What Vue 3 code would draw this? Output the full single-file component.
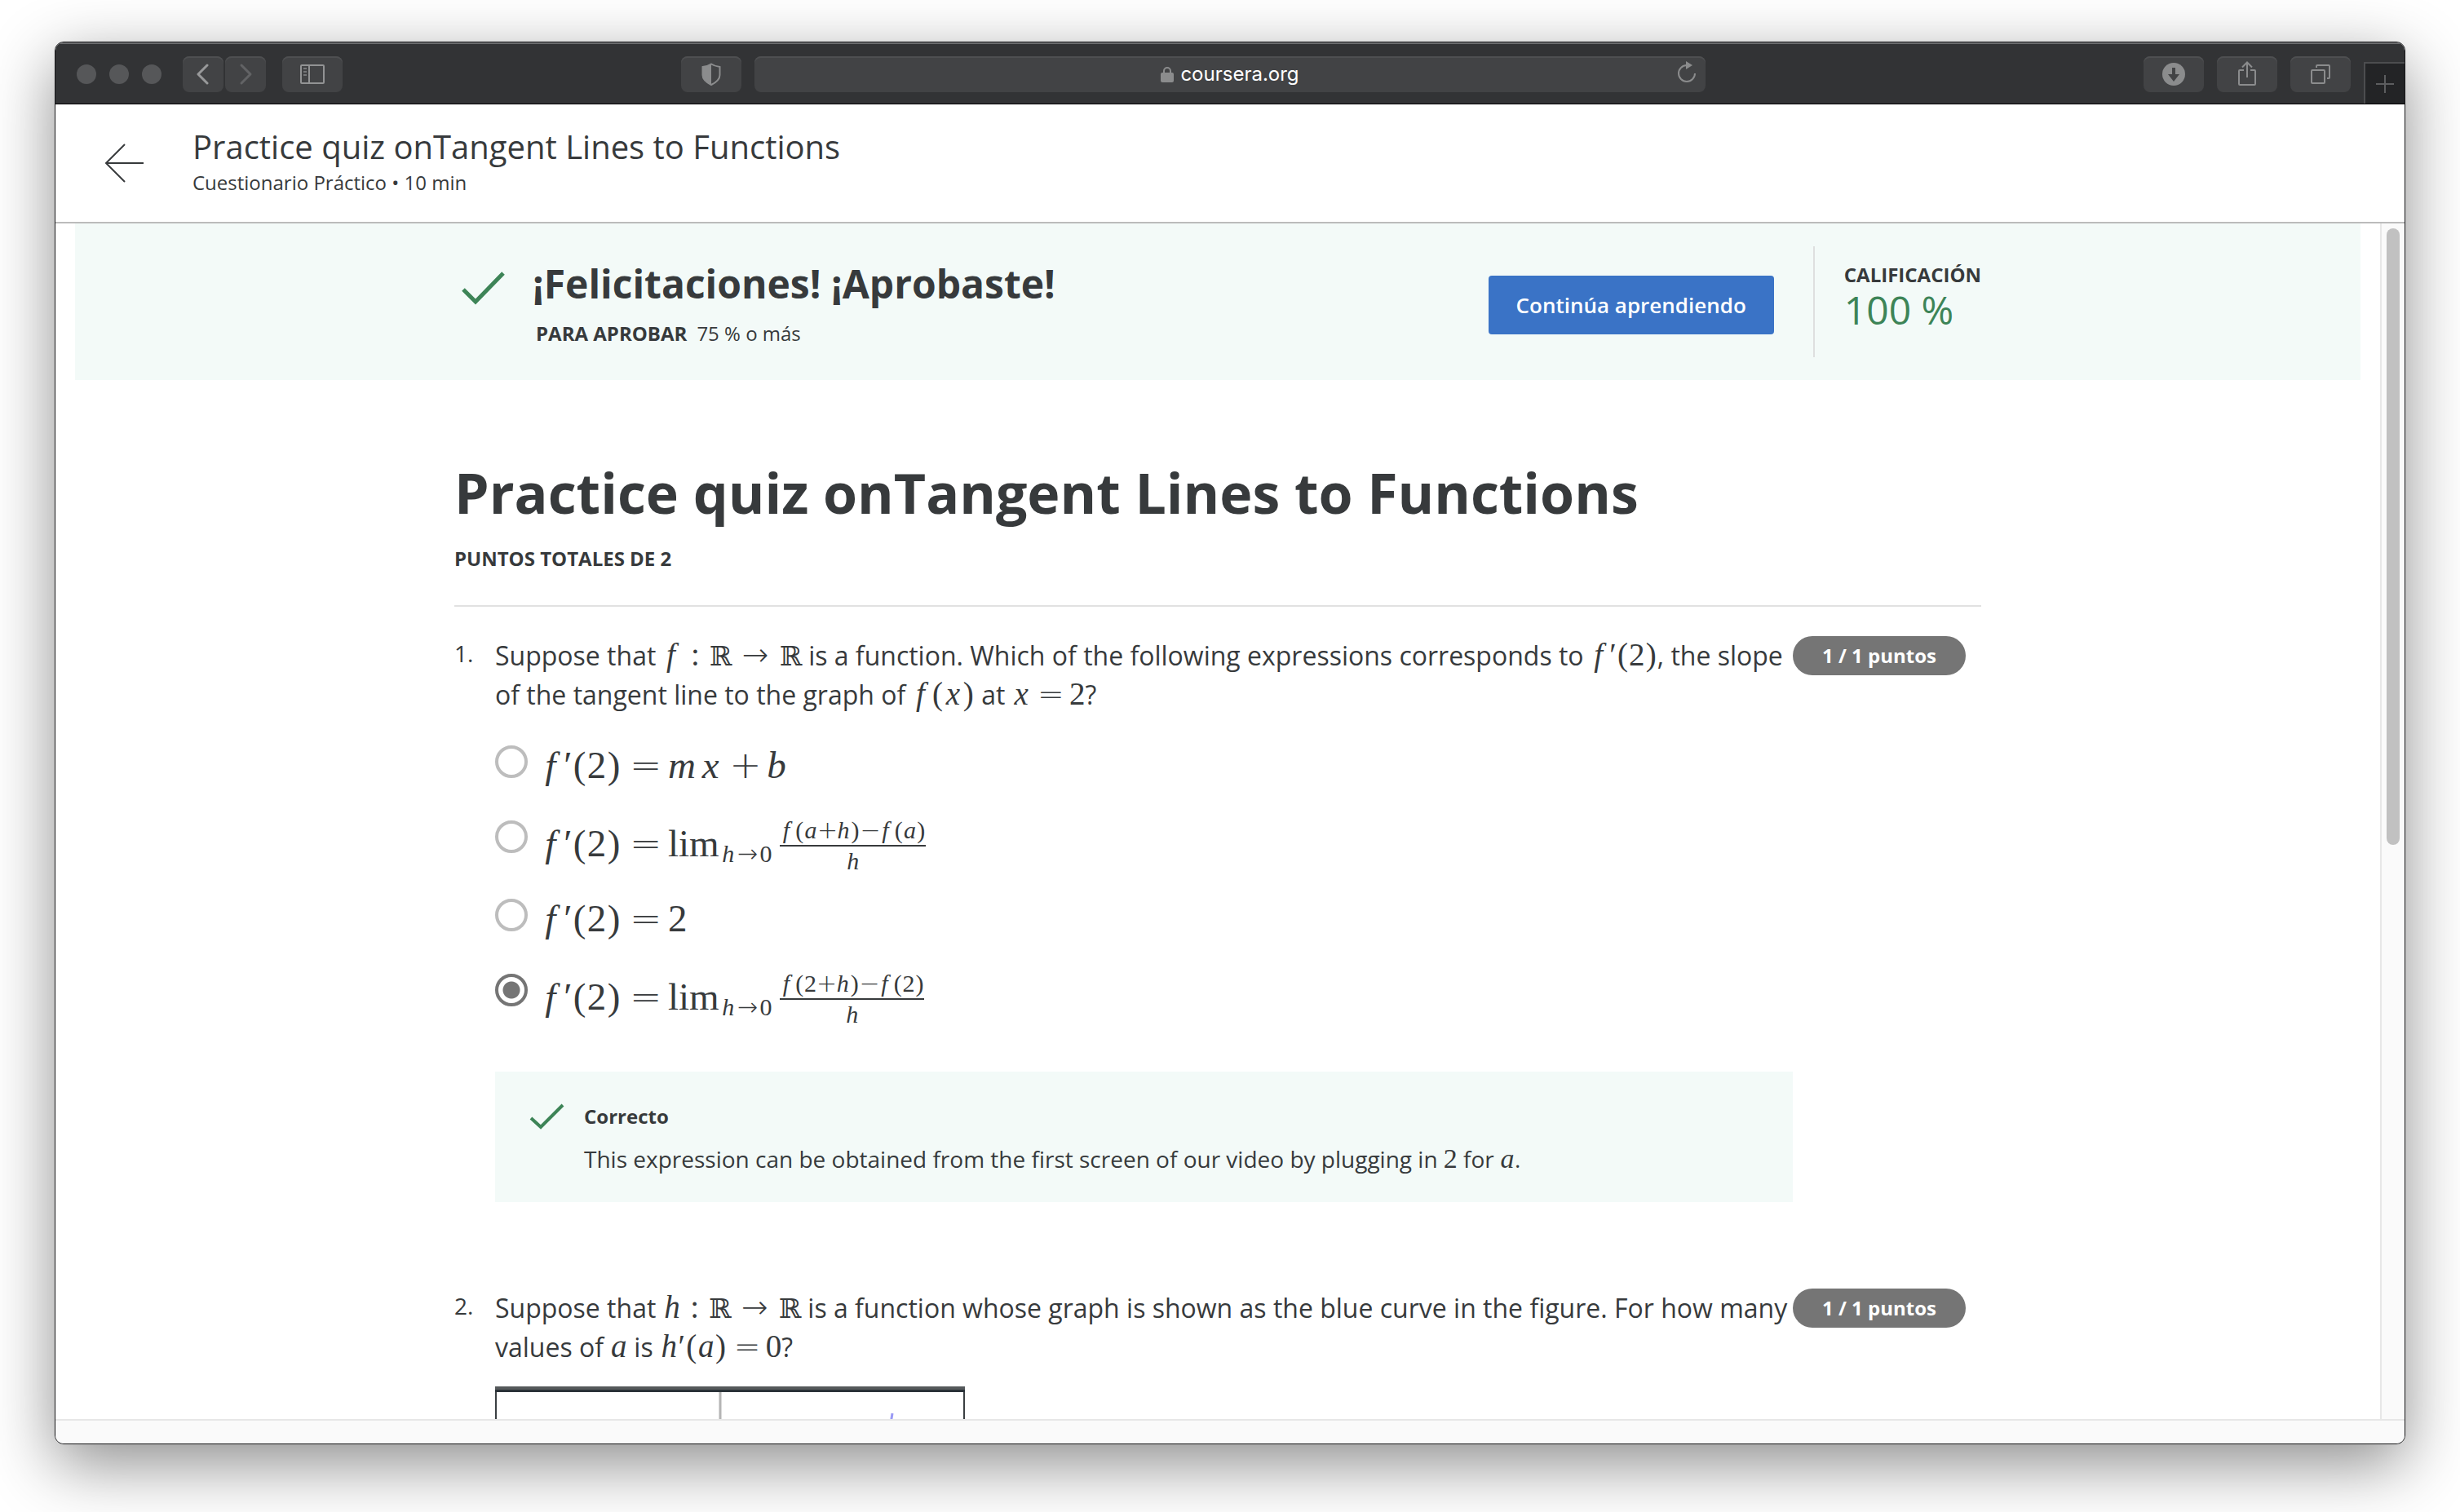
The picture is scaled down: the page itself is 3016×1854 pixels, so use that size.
<script setup>
import { h, ref } from 'vue'

const kinds = {
  '′': 'prime', '=': 'op rel', '→': 'op arrow', '+': 'op bin', '−': 'op bin',
  ':': 'colon', '(': 'paren', ')': 'paren', 'ℝ': 'real'
}
const kindOf = (c) => kinds[c] || (/[a-z]/.test(c) ? `var var-${c}` : 'digit')

const Expr = (props) =>
  h('span', { class: 'math' }, [...props.src].map((c) => h('span', { class: kindOf(c) }, c)))
Expr.props = ['src']

const selected = ref(3)
const answers = [
  { src: 'f′(2)=mx+b' },
  { src: 'f′(2)=', sub: 'h→0', num: 'f(a+h)−f(a)', den: 'h' },
  { src: 'f′(2)=2' },
  { src: 'f′(2)=', sub: 'h→0', num: 'f(2+h)−f(2)', den: 'h' }
]
</script>

<template>
  <div class="desktop">
    <div class="window">
      <div class="toolbar">
        <div class="wing">
          <div class="lights"><i></i><i></i><i></i></div>
          <div class="nav">
            <button class="tb half" aria-label="Back">
              <svg width="50" height="44" viewBox="0 0 50 44"><path d="M30 11 19 22 30 33" fill="none" stroke="#98999a" stroke-width="3" stroke-linecap="round" stroke-linejoin="round" /></svg>
            </button>
            <button class="tb half" aria-label="Forward">
              <svg width="50" height="44" viewBox="0 0 50 44"><path d="M20 11 31 22 20 33" fill="none" stroke="#626365" stroke-width="3" stroke-linecap="round" stroke-linejoin="round" /></svg>
            </button>
          </div>
          <button class="tb side" aria-label="Sidebar">
            <svg width="74" height="44" viewBox="0 0 74 44"><g fill="none" stroke="#929394" stroke-width="2"><rect x="23" y="11" width="28" height="22" rx="1" /><path d="M33 11V33" /></g><g fill="#77787a"><rect x="26" y="14" width="4" height="2" /><rect x="26" y="18" width="4" height="2" /><rect x="26" y="22" width="4" height="2" /></g></svg>
          </button>
          <button class="tb shield" aria-label="Privacy report">
            <svg width="74" height="44" viewBox="0 0 74 44"><path d="M37 9.500C40 11.500 44 12.500 47.500 13V23C47.500 28 43 32 37 35C31 32 26.500 28 26.500 23V13C30 12.500 34 11.500 37 9.500Z" fill="none" stroke="#8b8c8d" stroke-width="2" /><path d="M37 9.500V35C31 32 26.500 28 26.500 23V13C30 12.500 34 11.500 37 9.500Z" fill="#8b8c8d" /></svg>
          </button>
        </div>
        <div class="address">
          <svg width="16" height="20" viewBox="0 0 16 20"><path d="M4 10V6a4 4 0 0 1 8 0v4" fill="none" stroke="#8b8c8d" stroke-width="2" /><rect x="0" y="8" width="16" height="12" rx="2" fill="#8b8c8d" /></svg>
          <span>coursera.org</span>
          <button class="reload" aria-label="Reload">
            <svg width="26" height="28" viewBox="0 0 26 28"><path d="M23 15a10 10 0 1 1-10-10h2" fill="none" stroke="#8b8c8d" stroke-width="2" /><path d="M12 0 20 5 12 10Z" fill="#8b8c8d" /></svg>
          </button>
        </div>
        <div class="wing actions">
          <button class="tb" aria-label="Downloads">
            <svg width="74" height="44" viewBox="0 0 74 44"><circle cx="37" cy="22" r="14" fill="#8b8c8d" /><path d="M35 14H39V22H44L37 31 30 22H35Z" fill="#424345" /></svg>
          </button>
          <button class="tb" aria-label="Share">
            <svg width="74" height="44" viewBox="0 0 74 44"><path d="M33 17H28a1 1 0 0 0-1 1V34a1 1 0 0 0 1 1H46a1 1 0 0 0 1-1V18a1 1 0 0 0-1-1H41M37 26V8M31 13.500 37 7.500 43 13.500" fill="none" stroke="#8b8c8d" stroke-width="2" /></svg>
          </button>
          <button class="tb" aria-label="Tabs">
            <svg width="74" height="44" viewBox="0 0 74 44"><g fill="none" stroke="#8b8c8d" stroke-width="2"><rect x="26" y="17" width="16" height="16" rx="1" /><path d="M32 14V12a1 1 0 0 1 1-1H47a1 1 0 0 1 1 1V26a1 1 0 0 1-1 1H45" /></g></svg>
          </button>
          <button class="newtab" aria-label="New tab">
            <svg width="22" height="22" viewBox="0 0 22 22"><path d="M11 0V22M0 11H22" stroke="#5c5d5f" stroke-width="2" /></svg>
          </button>
        </div>
      </div>

      <header class="head">
        <a href="#" class="back" aria-label="Volver">
          <svg width="50" height="50" viewBox="0 0 50 50"><path d="M48 25H2M25 2 2 25 25 48" fill="none" stroke="#373a3c" stroke-width="2" /></svg>
        </a>
        <div>
          <p class="head-title">Practice quiz onTangent Lines to Functions</p>
          <p class="head-sub">Cuestionario Práctico • 10 min</p>
        </div>
      </header>

      <div class="body">
        <main class="page">
          <section class="banner">
            <div class="column banner-row">
              <svg class="check" width="56" height="44" viewBox="0 0 56 44"><path d="M3 23 18 38 52 3" fill="none" stroke="#3d8457" stroke-width="5" /></svg>
              <div class="result">
                <h2>¡Felicitaciones! ¡Aprobaste!</h2>
                <p><b>PARA APROBAR</b><span>75 % o más</span></p>
              </div>
              <button class="continue">Continúa aprendiendo</button>
              <div class="score">
                <b>CALIFICACIÓN</b>
                <span>100 %</span>
              </div>
            </div>
          </section>

          <div class="column">
            <h1>Practice quiz onTangent Lines to Functions</h1>
            <p class="total">PUNTOS TOTALES DE 2</p>

            <section class="question">
              <span class="number">1.</span>
              <div>
                <p class="prompt">Suppose that <Expr src="f:ℝ→ℝ" /> is a function. Which of the following expressions corresponds to <Expr src="f′(2)" />, the slope of the tangent line to the graph of <Expr src="f(x)" /> at <Expr src="x=2" />?</p>
                <div class="answers">
                  <label v-for="(a, i) in answers" :key="i" class="answer" :class="{ tall: a.num }">
                    <input v-model="selected" type="radio" name="q1" :value="i" />
                    <span class="formula">
                      <Expr :src="a.src" /><template v-if="a.num"><span class="lim">lim</span><span class="sub"><Expr :src="a.sub" /></span><span class="frac"><span class="num"><Expr :src="a.num" /></span><span class="den"><Expr :src="a.den" /></span></span></template>
                    </span>
                  </label>
                </div>
                <div class="feedback">
                  <svg width="44" height="34" viewBox="0 0 44 34"><path d="M2 18 14 29 41 2" fill="none" stroke="#3d8457" stroke-width="4" /></svg>
                  <div>
                    <b>Correcto</b>
                    <p>This expression can be obtained from the first screen of our video by plugging in <Expr src="2" /> for <Expr src="a" />.</p>
                  </div>
                </div>
              </div>
              <span class="points">1 / 1 puntos</span>
            </section>

            <section class="question second">
              <span class="number">2.</span>
              <div>
                <p class="prompt">Suppose that <Expr src="h:ℝ→ℝ" /> is a function whose graph is shown as the blue curve in the figure. For how many values of <Expr src="a" /> is <Expr src="h′(a)=0" />?</p>
                <svg class="graph" width="576" height="400" viewBox="0 0 576 400">
                  <path d="M1 0V400M575 0V400" stroke="#3a3f42" stroke-width="2" />
                  <path d="M276 6V400" stroke="#b4b4b4" stroke-width="3" />
                  <path d="M487 33 484 52" stroke="#9a9af5" stroke-width="3" />
                  <rect width="576" height="4" fill="#55595b" />
                  <rect y="4" width="576" height="3" fill="#2a3238" />
                </svg>
              </div>
              <span class="points">1 / 1 puntos</span>
            </section>
          </div>
        </main>
        <div class="track"><div class="thumb"></div></div>
      </div>
      <div class="status"></div>
    </div>
  </div>
</template>

<style>
body {
  background: #fff;
}

.math {
  display: inline-block;
  font-family: "Liberation Serif", serif;
  line-height: 0;
  white-space: nowrap;
}

.math > span {
  display: inline-block;
  text-align: center;
}

.math .var {
  font-style: italic;
  width: 0.58em;
}

.math .var-f {
  width: 0.5em;
  margin-right: 0.1em;
}

.math .var-m {
  width: 0.82em;
  text-align: left;
}

.math .var-b {
  width: 0.43em;
}

.math .var-a {
  width: 0.53em;
}

.math .digit {
  width: 0.5em;
}

.math .prime {
  width: 0.22em;
}

.math .paren {
  width: 0.39em;
}

.math .colon {
  width: 0.28em;
  margin: 0 0.28em;
}

.math .real {
  width: 0.85em;
  font-family: "DejaVu Math TeX Gyre", "DejaVu Sans", sans-serif;
  font-size: 0.85em;
}

.math .op {
  width: 0.78em;
  font-family: "DejaVu Sans", sans-serif;
  font-weight: 200;
}

.math .bin {
  margin: 0 0.2em;
}

.math .rel {
  margin: 0 0.22em;
}

.math .arrow {
  width: 1em;
  margin: 0 0.24em;
}
</style>

<style scoped>
* {
  box-sizing: border-box;
}

p,
h1,
h2 {
  margin: 0;
}

button {
  border: 0;
  padding: 0;
  font: inherit;
}

svg {
  display: block;
}

.desktop {
  display: flex;
  height: 100vh;
  padding: 51px 67px 83px;
  overflow: hidden;
  font-family: "Open Sans", sans-serif;
  color: #373a3c;
}

.window {
  flex: 1;
  display: flex;
  flex-direction: column;
  min-width: 0;
  border: 1px solid #161618;
  border-radius: 11px;
  overflow: hidden;
  background: #fff;
  box-shadow: 0 24px 80px rgba(0, 0, 0, 0.45);
}

.toolbar {
  display: flex;
  flex: none;
  align-items: center;
  height: 76px;
  background: #323335;
  border-top: 2px solid #6b6c6e;
  border-bottom: 1px solid #000;
}

.wing {
  display: flex;
  flex: 1 1 0;
  align-items: center;
  height: 100%;
}

.lights {
  display: flex;
  gap: 16px;
  margin-left: 26px;
}

.lights i {
  width: 24px;
  height: 24px;
  border-radius: 50%;
  background: #565759;
}

.nav {
  display: flex;
  gap: 2px;
  margin-left: 26px;
}

.tb {
  width: 74px;
  height: 44px;
  border-radius: 8px;
  background: #424345;
  box-shadow: inset 0 2px 0 #4e4f51;
}

.half {
  width: 50px;
}

.side {
  margin-left: 20px;
}

.shield {
  margin-left: auto;
  margin-right: 16px;
}

.address {
  position: relative;
  display: flex;
  align-items: center;
  justify-content: center;
  gap: 8px;
  width: 1166px;
  height: 44px;
  border-radius: 8px;
  background: #424345;
  box-shadow: inset 0 2px 0 #4e4f51;
  font-family: Inter, sans-serif;
  font-size: 24px;
  color: #fff;
}

.reload {
  position: absolute;
  right: 10px;
  top: 6px;
  background: none;
}

.actions {
  justify-content: flex-end;
  gap: 16px;
}

.newtab {
  display: flex;
  align-items: center;
  justify-content: center;
  align-self: flex-end;
  width: 50px;
  height: 51px;
  background: #232426;
  border-top: 2px solid #4c4d4f;
  border-left: 2px solid #4c4d4f;
}

.head {
  display: flex;
  flex: none;
  gap: 58px;
  padding: 24px 60px 32px;
  border-bottom: 2px solid #bbb;
}

.back {
  margin-top: 23px;
}

.head-title {
  font-size: 40px;
  line-height: 56px;
}

.head-sub {
  font-size: 24px;
  line-height: 32px;
}

.body {
  display: flex;
  flex: 1;
  min-height: 0;
}

.page {
  flex: 1;
  min-width: 0;
  padding: 0 24px;
  overflow: hidden;
}

.track {
  flex: none;
  width: 30px;
  padding: 6px;
  background: #fafafa;
  border-left: 2px solid #e7e7e7;
}

.thumb {
  width: 16px;
  height: 52%;
  border-radius: 8px;
  background: #c1c1c1;
}

.status {
  flex: none;
  height: 30px;
  background: #fafafa;
  border-top: 2px solid #e7e7e7;
}

.column {
  max-width: 1872px;
  margin: 0 auto;
}

.banner {
  padding: 28px 0;
  background: #f3faf8;
}

.banner-row {
  display: flex;
  align-items: center;
}

.check {
  margin: 0 32px 32px 8px;
}

.result {
  flex: 1;
}

.result h2 {
  font-size: 48px;
  line-height: 66px;
}

.result p {
  margin: 12px 0 0 4px;
  font-size: 24px;
  line-height: 32px;
}

.result span {
  margin-left: 12px;
}

.continue {
  height: 72px;
  margin-top: 8px;
  padding: 0 34px;
  border-radius: 4px;
  background: #3a73c6;
  color: #fff;
  font-size: 26px;
  font-weight: 600;
}

.score {
  display: flex;
  flex-direction: column;
  height: 136px;
  margin-left: 48px;
  padding: 19px 0 0 36px;
  border-left: 2px solid #dedfdf;
}

.score b {
  font-size: 24px;
  line-height: 32px;
}

.score span {
  font-size: 48px;
  line-height: 54px;
  color: #3d8457;
}

h1 {
  margin-top: 92px;
  font-size: 68px;
  line-height: 92px;
}

.total {
  padding: 19px 0 41px;
  border-bottom: 2px solid #e1e1e1;
  font-size: 24px;
  font-weight: 700;
  line-height: 32px;
}

.question {
  display: grid;
  grid-template-columns: 50px 1fr 212px;
  align-items: start;
  margin-top: 36px;
  padding-right: 19px;
}

.second {
  margin-top: 106px;
}

.number {
  font-size: 28px;
  line-height: 42px;
}

.prompt {
  font-size: 32px;
  line-height: 48px;
}

.prompt .math {
  font-size: 39px;
}

.points {
  border-radius: 24px;
  background: #757575;
  color: #fff;
  font-size: 24px;
  font-weight: 700;
  line-height: 48px;
  text-align: center;
}

.answers {
  margin-top: 38px;
}

.answer {
  display: flex;
  height: 92px;
}

.tall {
  height: 96px;
}

.answer input {
  appearance: none;
  width: 40px;
  height: 40px;
  margin: 0 16px 0 0;
  border: 4px solid #bdbdbd;
  border-radius: 50%;
}

.answer input:checked {
  border-color: #757575;
  background: radial-gradient(circle, #757575 10px, transparent 11px);
}

.formula {
  font-family: "Liberation Serif", serif;
  font-size: 47px;
  line-height: 48px;
  white-space: nowrap;
}

.tall .formula {
  padding-top: 4px;
}

.sub {
  font-size: 30px;
  line-height: 0;
  vertical-align: -7px;
}

.lim {
  display: inline-block;
  width: 65px;
}

.frac {
  display: inline-flex;
  flex-direction: column;
  margin: -24px 0 -24px 10px;
  font-size: 30px;
  line-height: 36px;
  text-align: center;
  vertical-align: 22px;
}

.num {
  border-bottom: 2px solid #373a3c;
}

.sub :deep(.op),
.frac :deep(.op) {
  margin: 0;
}

.feedback {
  display: flex;
  gap: 23px;
  margin-top: 24px;
  padding: 39px 40px 33px 42px;
  background: #f3faf8;
}

.feedback b {
  display: block;
  font-size: 24px;
  line-height: 32px;
}

.feedback p {
  margin-top: 16px;
  font-size: 28px;
  line-height: 40px;
}

.feedback .math {
  font-size: 34px;
}

.graph {
  margin-top: 24px;
}
</style>
